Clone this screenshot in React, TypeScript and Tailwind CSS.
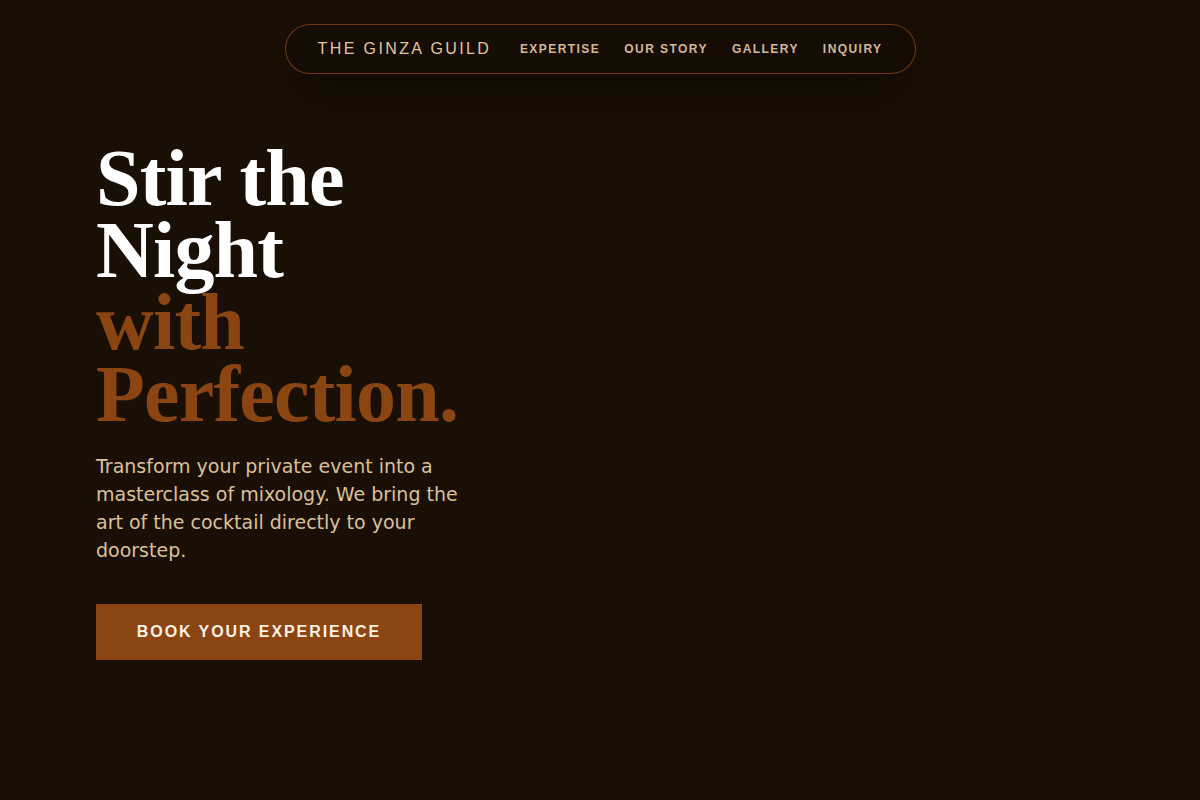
const navLinks = ["Expertise", "Our Story", "Gallery", "Inquiry"];

export default function App() {
  return (
    <div className="min-h-screen w-full bg-[#1a0f05] font-['Liberation_Sans',sans-serif]">
      {/* === NAV === */}
      <header className="flex justify-center pt-6">
        <nav className="flex h-[50px] w-[631px] items-center rounded-full border border-[#8b4513]/80 bg-[#150c04] pl-8 pr-8 shadow-[0_25px_50px_-12px_rgba(0,0,0,0.6)]">
          <span className="text-[16px] font-medium uppercase tracking-[0.15em] text-[#e2c6a0]">
            The Ginza Guild
          </span>
          <ul className="ml-auto flex items-center gap-6">
            {navLinks.map((link) => (
              <li
                key={link}
                className="text-[12px] font-semibold uppercase tracking-[0.12em] text-[#d4b896]"
              >
                {link}
              </li>
            ))}
          </ul>
        </nav>
      </header>

      {/* === HERO === */}
      <section className="px-24 pt-[68px]">
        <h1 className="font-['Liberation_Serif',serif] text-[80px] font-bold leading-[72px] tracking-[-0.01em] text-white">
          Stir the
          <br />
          Night
          <br />
          <span className="text-[#8b4513]">
            with
            <br />
            Perfection.
          </span>
        </h1>

        <p className="mt-[22px] max-w-[390px] font-['DejaVu_Sans',sans-serif] text-[19px] leading-[28px] text-[#dcc09a]">
          Transform your private event into a masterclass of mixology. We bring
          the art of the cocktail directly to your doorstep.
        </p>

        <button className="mt-10 h-14 w-[326px] bg-[#8b4513] text-[16px] font-semibold uppercase tracking-[0.12em] text-[#fbf1e4]">
          Book Your Experience
        </button>
      </section>
    </div>
  );
}
